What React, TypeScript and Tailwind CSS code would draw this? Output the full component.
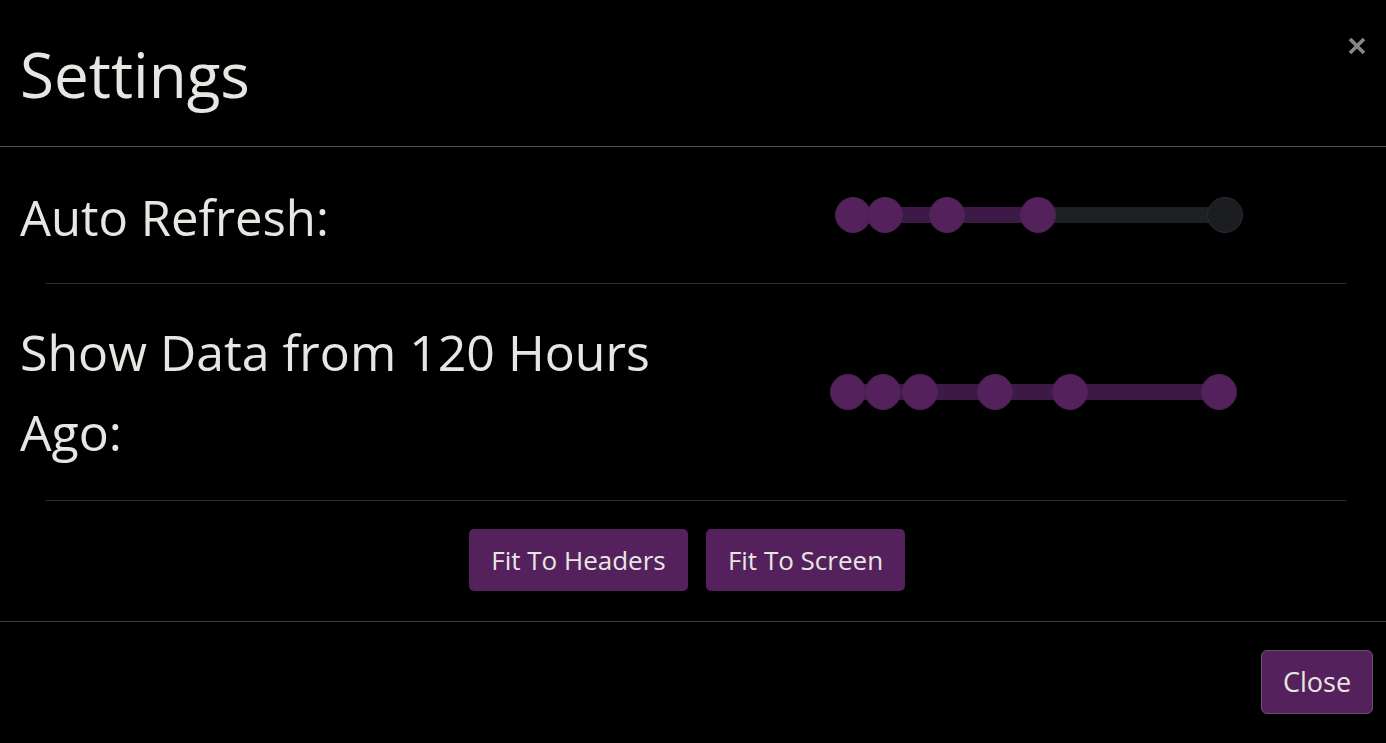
import React from "react";

const FONT = { fontFamily: '"Open Sans", "Noto Sans", sans-serif' };

function Slider({ points, fill, end }: { points: number[]; fill: number; end: number }) {
  const start = points[0];
  return (
    <div className="relative w-[420px] h-[40px]">
      <div
        className="absolute top-[12px] h-[16px] bg-[#1f2023]"
        style={{ left: start, width: end - start }}
      />
      <div
        className="absolute top-[12px] h-[16px] bg-[#3d1a45]"
        style={{ left: start, width: fill - start }}
      />
      {points.map((p, i) => (
        <div
          key={i}
          className="absolute top-[2px] w-[36px] h-[36px] rounded-full bg-[#54215c] border border-[#4a2350]"
          style={{ left: p - 18 }}
        />
      ))}
      {end > points[points.length - 1] + 1 && (
        <div
          className="absolute top-[2px] w-[36px] h-[36px] rounded-full bg-[#1c1d20] border border-[#2a2b2e]"
          style={{ left: end - 18 }}
        />
      )}
    </div>
  );
}

export default function App() {
  return (
    <div className="w-[1386px] h-[743px] bg-black text-[#e8e6e3] overflow-hidden" style={FONT}>
      {/* Header */}
      <div className="h-[147px] border-b border-[#4e5156] flex items-start justify-between">
        <h1 className="pl-[20px] pt-[34px] text-[62px] leading-[80px] font-normal">Settings</h1>
        <button className="mt-[36px] mr-[19px] w-[20px] h-[20px] text-[#878787]">
          <svg viewBox="0 0 20 20" width="20" height="20">
            <path d="M3 3 L17 17 M17 3 L3 17" stroke="currentColor" strokeWidth="3.6" strokeLinecap="butt" />
          </svg>
        </button>
      </div>

      {/* Row 1 */}
      <div className="flex items-center pt-[30px] pb-[26px]">
        <div className="w-[680px] pl-[20px] text-[49px] leading-[80px]">Auto Refresh:</div>
        <div className="ml-[150px] -mt-[4px]">
          <Slider points={[23, 55, 117, 208]} fill={208} end={395} />
        </div>
      </div>
      <div className="ml-[46px] mr-[40px] border-t border-[#2c2d30]" />

      {/* Row 2 */}
      <div className="flex items-center py-[28px]">
        <div className="w-[680px] pl-[20px] text-[50px] leading-[80px]">Show Data from 120 Hours Ago:</div>
        <div className="ml-[150px]">
          <Slider points={[18, 53, 90, 165, 240, 389]} fill={389} end={389} />
        </div>
      </div>
      <div className="ml-[46px] mr-[40px] border-t border-[#2c2d30]" />

      {/* Buttons */}
      <div className="flex justify-center gap-[18px] pt-[28px] pb-[30px] pr-[12px]">
        <button className="h-[62px] w-[219px] rounded-[5px] bg-[#54215c] text-[26px] text-[#e8e6e3]">Fit To Headers</button>
        <button className="h-[62px] w-[199px] rounded-[5px] bg-[#54215c] text-[26px] text-[#e8e6e3]">Fit To Screen</button>
      </div>

      {/* Footer */}
      <div className="border-t border-[#3a3c40] flex justify-end pt-[28px] pr-[13px]">
        <button className="h-[64px] w-[112px] rounded-[6px] bg-[#54215c] border border-[#6b5070] text-[27px] text-[#e8e6e3]">Close</button>
      </div>
    </div>
  );
}
